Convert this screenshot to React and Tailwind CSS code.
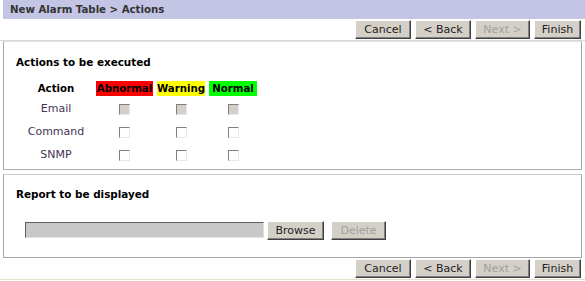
const btn =
  "h-[19px] bg-[#d4d0c8] border border-t-white border-l-white border-r-[#404040] border-b-[#404040] shadow-[inset_-1px_-1px_0_#808080] text-[11px] leading-none flex items-center justify-center";

function Buttons() {
  return (
    <div className="flex justify-end gap-[4px] pr-[4px] h-[21px] items-center">
      <button className={`${btn} w-[56px] text-[#222]`}>Cancel</button>
      <button className={`${btn} w-[56px] text-[#222]`}>&lt; Back</button>
      <button className={`${btn} w-[55px] text-[#a0a0a0]`}>Next &gt;</button>
      <button className={`${btn} w-[47px] text-[#222]`}>Finish</button>
    </div>
  );
}

function Box({ disabled }) {
  return (
    <span
      className={`inline-block w-[11px] h-[11px] border border-t-[#808080] border-l-[#808080] border-r-[#e8e8e8] border-b-[#e8e8e8] ${
        disabled ? "bg-[#d4d0c8]" : "bg-white"
      }`}
    />
  );
}

const rows = [
  ["Email", true],
  ["Command", false],
  ["SNMP", false],
];

export default function App() {
  return (
    <div className="w-[585px] h-[281px] bg-white text-[11px] text-[#333]" style={{ fontFamily: '"DejaVu Sans", Verdana, sans-serif' }}>
      <div className="ml-[3px] h-[19px] bg-[#c4c4e4] flex items-center pl-[7px] font-bold text-[10.2px] text-[#333]">
        New Alarm Table &gt; Actions
      </div>
      <Buttons />
      <div className="h-[1px] bg-[#d8d8d8]" />

      <div className="mx-[3px] h-[129px] border border-t-[#e0e0e0] border-l-[#a8a8a8] border-r-[#a8a8a8] border-b-[#a8a8a8] pl-[12px] pt-[13px]">
        <div className="font-bold text-[10.4px] text-black">Actions to be executed</div>
        <div className="mt-[11px] flex items-center h-[14px] font-bold text-[10.2px] text-black">
          <div className="w-[80px] text-center">Action</div>
          <div className="w-[57px] bg-[#ff0000] text-center">Abnormal</div>
          <div className="ml-[4px] w-[48px] bg-[#ffff00] text-center">Warning</div>
          <div className="ml-[4px] w-[48px] bg-[#00ff00] text-center">Normal</div>
        </div>
        <div className="mt-[2px]">
          {rows.map(([label, dis]) => (
            <div key={label} className="flex items-center h-[23px] text-[#443355]">
              <div className="w-[80px] text-center">{label}</div>
              <div className="w-[57px] flex justify-center"><Box disabled={dis} /></div>
              <div className="ml-[4px] w-[48px] flex justify-center"><Box disabled={dis} /></div>
              <div className="ml-[4px] w-[48px] flex justify-center"><Box disabled={dis} /></div>
            </div>
          ))}
        </div>
      </div>

      <div className="mx-[3px] mt-[4px] h-[84px] border border-t-[#c8c8c8] border-l-[#a8a8a8] border-r-[#a8a8a8] border-b-[#a8a8a8] pl-[12px] pt-[12px]">
        <div className="font-bold text-[10.4px] text-black">Report to be displayed</div>
        <div className="mt-[18px] ml-[9px] flex items-center">
          <div className="w-[239px] h-[16px] bg-[#c8c8c8] border border-t-[#606060] border-l-[#606060] border-r-[#e0e0e0] border-b-[#e0e0e0]" />
          <button className={`${btn} ml-[3px] w-[57px] text-[#222]`}>Browse</button>
          <button className={`${btn} ml-[7px] w-[55px] text-[#a0a0a0]`}>Delete</button>
        </div>
      </div>

      <Buttons />
      <div className="h-[1px] bg-[#e4e0d0]" />
    </div>
  );
}
